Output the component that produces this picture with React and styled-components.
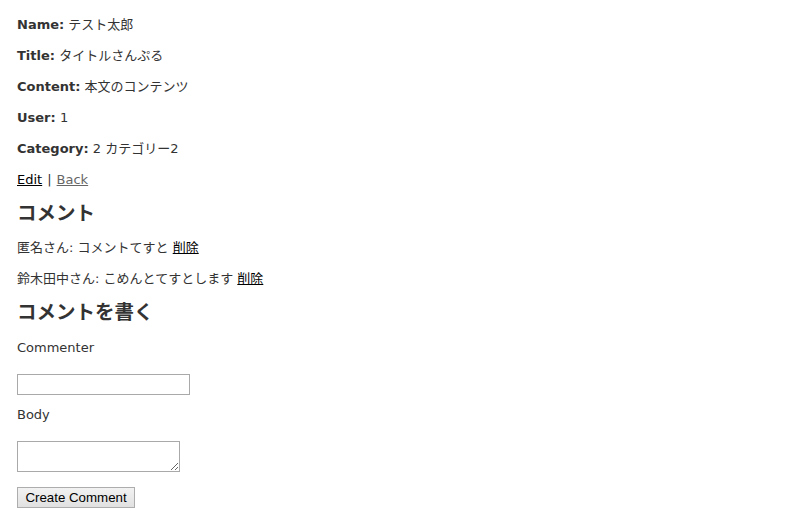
import React from 'react'
import styled, { createGlobalStyle } from 'styled-components'

const GlobalStyle = createGlobalStyle`
  body {
    margin: 0;
    background: #fff;
    color: #333;
    font-family: "DejaVu Sans", Verdana, "Noto Sans CJK JP", sans-serif;
    font-size: 13px;
    line-height: 18px;
  }
`

const Page = styled.div`
  padding: 3px 17px 20px;
`

const Para = styled.p`
  margin: 13px 0;
`

const Strong = styled.strong`
  font-weight: bold;
`

const TextLink = styled.a`
  color: ${p => (p.$visited ? '#666' : '#000')};
  text-decoration: underline;
  cursor: pointer;
`

const Sep = styled.span`
  color: #333;
  margin: 0 5px;
`

const Heading = styled.h2`
  font-size: 19.5px;
  line-height: 18px;
  font-weight: bold;
  color: #333;
  margin: 16px 0;
`

const Form = styled.form`
  margin-top: 17px;
`

const Field = styled.div`
  margin-top: ${p => p.$gap || 0}px;
`

const Label = styled.label`
  display: block;
  line-height: 18px;
`

const TextInput = styled.input`
  display: block;
  box-sizing: border-box;
  width: 173px;
  height: 21px;
  margin: 17px 0 0;
  border: 1px solid #a9a9a9;
  padding: 1px 2px;
  font-size: 13px;
`

const TextArea = styled.textarea`
  display: block;
  box-sizing: border-box;
  width: 163px;
  height: 31px;
  margin: 17px 0 0;
  border: 1px solid #a9a9a9;
  padding: 2px;
  font-size: 13px;
`

const SubmitButton = styled.button`
  display: block;
  box-sizing: border-box;
  width: 118px;
  height: 21px;
  margin-top: 15px;
  padding: 0 6px;
  border: 1px solid #adadad;
  border-radius: 0;
  background: linear-gradient(#f2f2f2, #e1e1e1);
  color: #000;
  font-family: "Liberation Sans", Arial, sans-serif;
  font-size: 13.3px;
`

const details = [
  ['Name:', 'テスト太郎'],
  ['Title:', 'タイトルさんぷる'],
  ['Content:', '本文のコンテンツ'],
  ['User:', '1'],
  ['Category:', '2 カテゴリー2'],
]

const comments = [
  ['匿名さん', 'コメントてすと'],
  ['鈴木田中さん', 'こめんとてすとします'],
]

export default function App() {
  return (
    <Page>
      <GlobalStyle />
      {details.map(([k, v]) => (
        <Para key={k}>
          <Strong>{k}</Strong> {v}
        </Para>
      ))}
      <Para>
        <TextLink>Edit</TextLink>
        <Sep>|</Sep>
        <TextLink $visited>Back</TextLink>
      </Para>

      <Heading>コメント</Heading>
      {comments.map(([who, body]) => (
        <Para key={who}>
          {who}: {body} <TextLink>削除</TextLink>
        </Para>
      ))}

      <Heading>コメントを書く</Heading>
      <Form onSubmit={e => e.preventDefault()}>
        <Field>
          <Label htmlFor="commenter">Commenter</Label>
          <TextInput id="commenter" type="text" />
        </Field>
        <Field $gap={11}>
          <Label htmlFor="body">Body</Label>
          <TextArea id="body" />
        </Field>
        <SubmitButton type="submit">Create Comment</SubmitButton>
      </Form>
    </Page>
  )
}
